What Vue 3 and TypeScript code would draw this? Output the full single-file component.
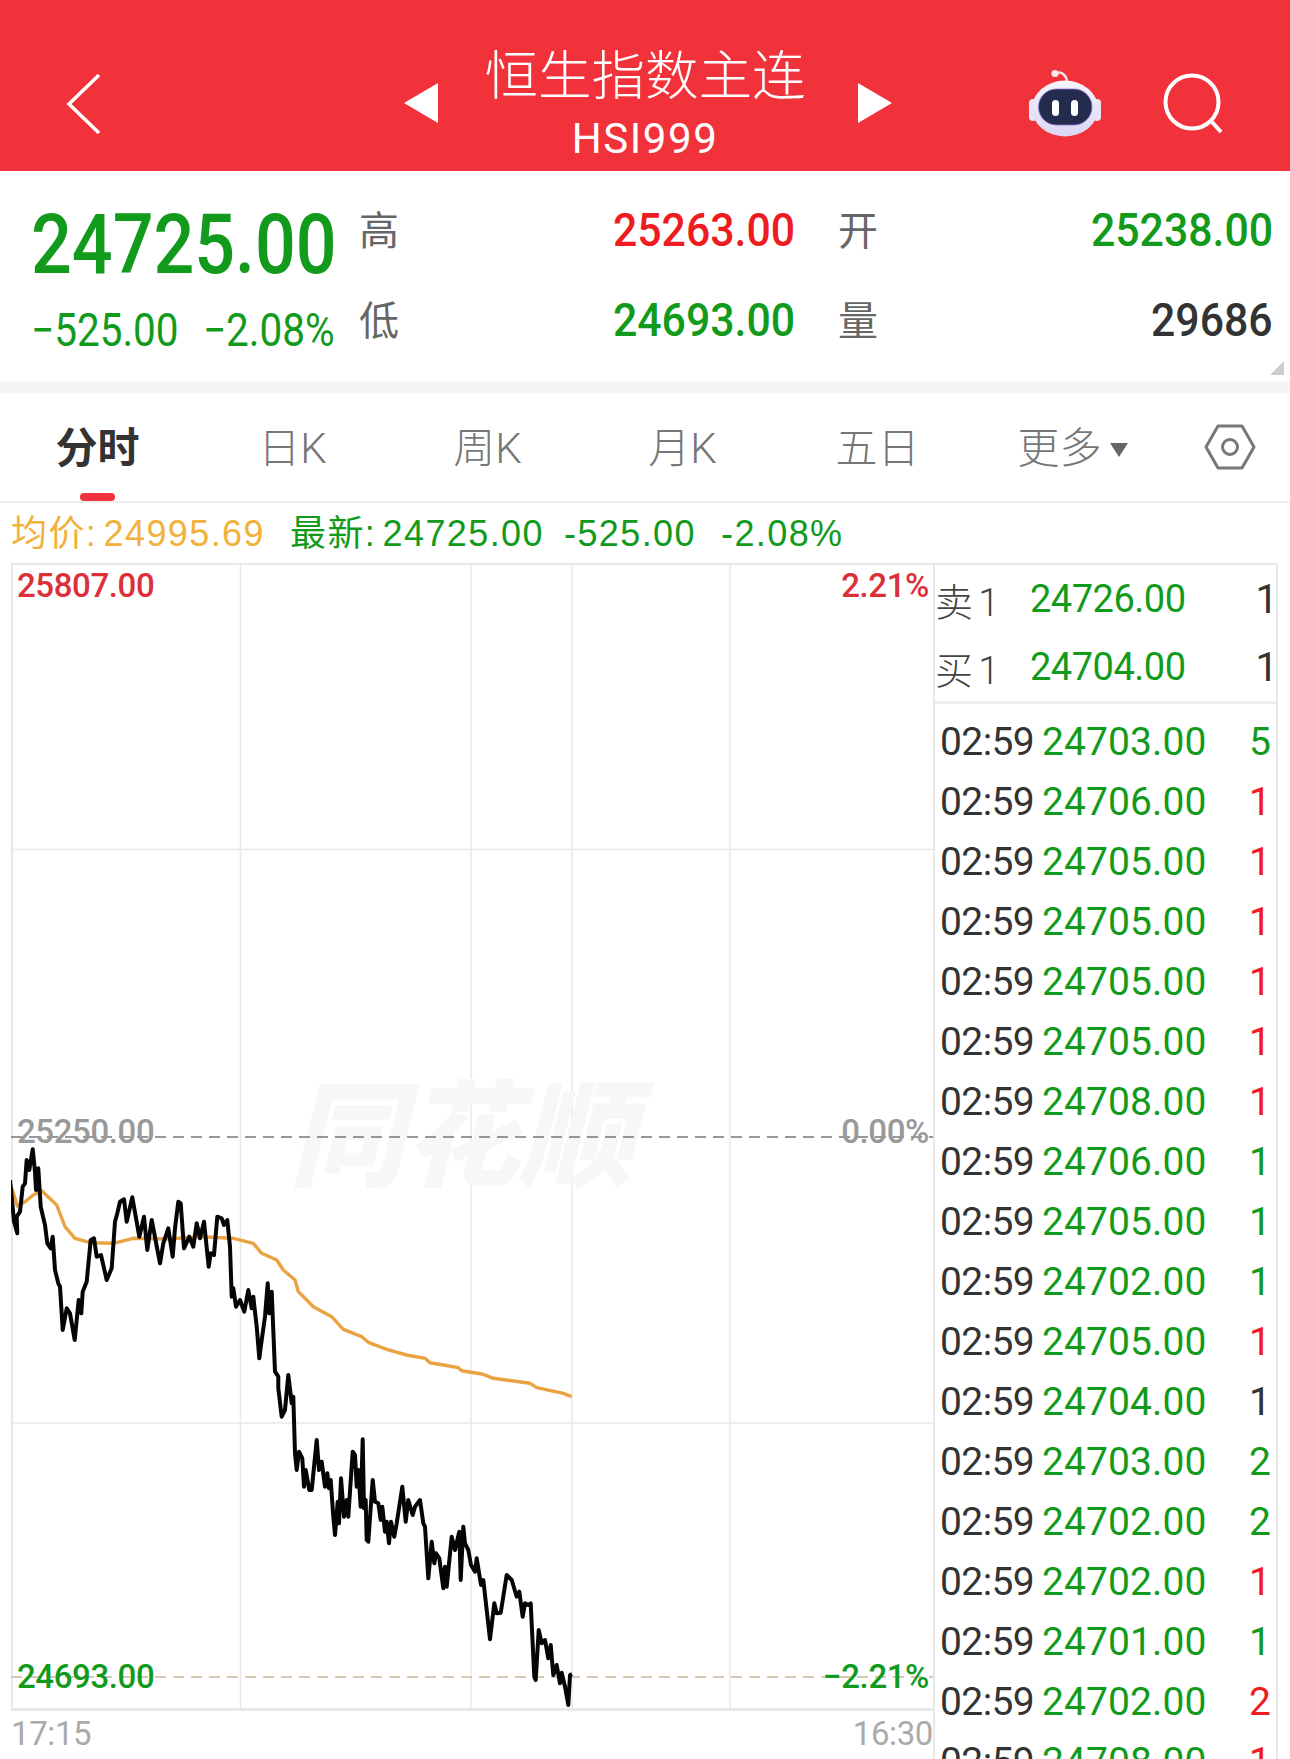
<script setup lang="ts">
type P = [number, number];
const conv = (pts: P[], ox: number, oy: number) =>
  pts.map(([x, y]) => `${(x / 3 + ox).toFixed(1)},${(y / 3 + oy).toFixed(1)}`);

const black3: P[] = [[30,240],[36,300],[42,365],[52,400],[50,350],[60,335],[68,260],[75,250],[80,180],[88,210],[98,148],[105,215],[108,270],[115,205],[122,320],[135,375],[142,430],[152,445],[158,410],[165,510],[175,550],[180,560],[188,690],[200,625],[210,640],[224,720],[236,600],[244,640],[248,575],[260,545],[272,420],[282,415],[290,470],[303,465],[320,540],[335,505],[345,365],[352,340],[360,305],[372,298],[380,365],[397,292],[418,410],[432,350],[442,450],[455,360],[480,490],[490,430],[505,385],[518,470],[525,385],[535,305],[542,310],[552,445],[568,410],[580,440],[590,370],[600,415],[612,365],[626,500],[632,460],[642,465],[652,350],[665,355],[672,375],[682,360],[690,440],[695,590],[700,565],[708,620],[720,600],[733,635],[745,570],[755,625],[760,590],[770,680],[778,775],[785,720],[795,650],[803,550],[808,640],[815,575],[825,815],[832,825]];
const black9: P[] = [[25,50],[25,85],[35,170],[45,150],[55,45],[65,130],[70,110],[75,280],[80,330],[87,275],[97,295],[102,380],[107,330],[118,390],[125,390],[140,240],[147,330],[155,305],[165,380],[172,340],[177,385],[182,360],[190,470],[195,525],[203,425],[207,490],[213,355],[222,470],[230,420],[235,470],[248,275],[255,285],[260,380],[265,330],[272,440],[278,238],[282,445],[287,420],[290,540],[295,545],[308,360],[315,425],[325,430],[332,480],[337,440],[345,515],[350,485],[357,550],[363,485],[373,530],[380,490],[397,380],[407,485],[415,420],[428,465],[435,440],[450,420],[460,490]];
const black10: P[] = [[70,130],[75,140],[85,295],[95,185],[103,250],[108,220],[118,235],[130,325],[135,260],[140,320],[155,170],[165,210],[178,155],[182,300],[190,140],[195,190],[205,210],[213,255],[225,275],[230,235],[243,315],[250,300],[270,478],[283,370],[290,400],[302,398],[320,285],[335,300],[350,350],[358,335],[368,410],[375,370],[385,375],[392,370],[403,590],[407,600],[416,450],[425,490],[435,480],[445,535],[452,495],[460,585],[470,555],[480,610],[485,578],[495,620],[505,675],[510,585],[516,582]];
const pricePath = [...conv(black3, 0, 1100), ...conv(black9, 270, 1360), ...conv(black10, 400, 1480)].join(' ');

const orange3: P[] = [[36,265],[52,318],[75,305],[100,285],[125,272],[170,315],[195,380],[225,415],[270,428],[340,430],[400,415],[500,417],[600,410],[700,415],[760,430],[785,460],[830,480],[850,510],[885,540],[895,575]];
const orange4: P[] = [[0,40],[40,80],[95,110],[130,148],[185,170],[205,187],[260,208],[320,225],[375,235],[390,248],[430,255],[475,263],[485,272],[550,283],[580,295],[690,310],[710,323],[790,340],[815,350]];
const avgPath = [...conv(orange3, 0, 1100), ...conv(orange4, 300, 1280)].join(' ');

const tabs = ['分时', '日K', '周K', '月K', '五日'];
const trades: { price: string; qty: number; tone: string }[] = [
  { price: '24703.00', qty: 5, tone: 'green' },
  { price: '24706.00', qty: 1, tone: 'red' },
  { price: '24705.00', qty: 1, tone: 'red' },
  { price: '24705.00', qty: 1, tone: 'red' },
  { price: '24705.00', qty: 1, tone: 'red' },
  { price: '24705.00', qty: 1, tone: 'red' },
  { price: '24708.00', qty: 1, tone: 'red' },
  { price: '24706.00', qty: 1, tone: 'green' },
  { price: '24705.00', qty: 1, tone: 'green' },
  { price: '24702.00', qty: 1, tone: 'green' },
  { price: '24705.00', qty: 1, tone: 'red' },
  { price: '24704.00', qty: 1, tone: 'dark' },
  { price: '24703.00', qty: 2, tone: 'green' },
  { price: '24702.00', qty: 2, tone: 'green' },
  { price: '24702.00', qty: 1, tone: 'red' },
  { price: '24701.00', qty: 1, tone: 'green' },
  { price: '24702.00', qty: 2, tone: 'red' },
  { price: '24708.00', qty: 1, tone: 'red' },
];
</script>

<template>
  <div class="page">
    <header class="bar">
      <svg class="back" width="36" height="64" viewBox="0 0 36 64">
        <path d="M33 3 L3 32 L33 61" fill="none" stroke="#fff" stroke-width="3.5" />
      </svg>
      <div class="center">
        <svg width="34" height="40" viewBox="0 0 34 40"><path d="M34 0 V40 L0 20 Z" fill="#fff" /></svg>
        <div class="title">
          <div class="name">恒生指数主连</div>
          <div class="code">HSI999</div>
        </div>
        <svg width="34" height="40" viewBox="0 0 34 40"><path d="M0 0 V40 L34 20 Z" fill="#fff" /></svg>
      </div>
      <svg class="robot" width="80" height="76" viewBox="15 12 80 76">
        <defs>
          <linearGradient id="shell" x1="0" y1="0" x2="0" y2="1">
            <stop offset="0" stop-color="#f6f4fc" />
            <stop offset="1" stop-color="#dcd6f4" />
          </linearGradient>
        </defs>
        <path d="M45 17 C50 15 56 18 57 25" fill="none" stroke="#f1e6ec" stroke-width="2.4" />
        <circle cx="45" cy="17.5" r="3.6" fill="#f6e7ea" />
        <rect x="19" y="43" width="8" height="22" rx="4" fill="#e8e4f8" />
        <rect x="83" y="43" width="8" height="22" rx="4" fill="#e8e4f8" />
        <ellipse cx="55" cy="52.5" rx="33" ry="28" fill="url(#shell)" />
        <rect x="28.5" y="33" width="53.5" height="36" rx="18" fill="#232c4c" stroke="#8f74d8" stroke-width="0.8" />
        <rect x="42" y="44" width="7" height="16" rx="3.5" fill="#fff" />
        <rect x="61" y="44" width="7" height="16" rx="3.5" fill="#fff" />
      </svg>
      <svg class="search" width="64" height="64" viewBox="0 0 64 64">
        <circle cx="29" cy="29" r="26.5" fill="none" stroke="#fff" stroke-width="4" />
        <path d="M49 49 L58 59" stroke="#fff" stroke-width="4" />
      </svg>
    </header>

    <section class="stats">
      <div class="quote">
        <div class="big">24725.00</div>
        <div class="sub"><span>−525.00</span><span>−2.08%</span></div>
      </div>
      <div class="grid">
        <div class="cell"><span class="label">高</span><span class="val red">25263.00</span></div>
        <div class="cell"><span class="label">开</span><span class="val green">25238.00</span></div>
        <div class="cell"><span class="label">低</span><span class="val green">24693.00</span></div>
        <div class="cell"><span class="label">量</span><span class="val dark">29686</span></div>
      </div>
      <span class="corner"></span>
    </section>

    <nav class="tabs">
      <div v-for="(t, i) in tabs" :key="t" class="tab" :class="{ active: i === 0 }">{{ t }}</div>
      <div class="tab">更多<span class="caret"></span></div>
      <div class="gear">
        <svg width="52" height="46" viewBox="0 0 52 46">
          <path d="M2 23 L14 2 H38 L50 23 L38 44 H14 Z" fill="none" stroke="#777" stroke-width="3" stroke-linejoin="round" />
          <circle cx="26" cy="23" r="7.5" fill="none" stroke="#777" stroke-width="3" />
        </svg>
      </div>
    </nav>

    <div class="info">
      <span class="avg">均价: 24995.69</span>
      <span class="green latest">最新: 24725.00</span>
      <span class="green delta">-525.00</span>
      <span class="green pct">-2.08%</span>
    </div>

    <div class="main">
      <div class="left">
        <div class="chart">
          <svg class="plot" width="922" height="1148" viewBox="11 563 922 1148">
            <g stroke="#e8e8e8" stroke-width="1.5">
              <line x1="240.5" y1="563" x2="240.5" y2="1711" />
              <line x1="471" y1="563" x2="471" y2="1711" />
              <line x1="572" y1="563" x2="572" y2="1711" />
              <line x1="730" y1="563" x2="730" y2="1711" />
              <line x1="11" y1="849.5" x2="933" y2="849.5" />
              <line x1="11" y1="1423" x2="933" y2="1423" />
            </g>
            <text class="mark" x="289" y="1177">同花顺</text>
            <line x1="11" y1="1137" x2="933" y2="1137" stroke="#777" stroke-width="1.5" stroke-dasharray="11 7" />
            <line x1="11" y1="1677" x2="933" y2="1677" stroke="#cdb898" stroke-width="1.5" stroke-dasharray="11 7" />
            <polyline :points="avgPath" fill="none" stroke="#e9a342" stroke-width="3.4" stroke-linejoin="round" />
            <polyline :points="pricePath" fill="none" stroke="#050505" stroke-width="4" stroke-linejoin="round" />
          </svg>
          <span class="tag tl c-red">25807.00</span>
          <span class="tag tr c-red">2.21%</span>
          <span class="tag ml c-gray">25250.00</span>
          <span class="tag mr c-gray">0.00%</span>
          <span class="tag bl green">24693.00</span>
          <span class="tag br green">−2.21%</span>
        </div>
        <div class="axis"><span>17:15</span><span>16:30</span></div>
      </div>

      <aside class="side">
        <div class="book">
          <div class="level"><span class="lab">卖 1</span><span class="lp green">24726.00</span><span class="lq">1</span></div>
          <div class="level"><span class="lab">买 1</span><span class="lp green">24704.00</span><span class="lq">1</span></div>
        </div>
        <div class="list">
          <div v-for="(r, i) in trades" :key="i" class="row">
            <span class="time">02:59</span>
            <span class="price green">{{ r.price }}</span>
            <span class="qty" :class="r.tone">{{ r.qty }}</span>
          </div>
        </div>
      </aside>
    </div>
  </div>
</template>

<style>
html, body { margin: 0; background: #fff; }
</style>

<style scoped>
.page {
  width: 1290px;
  height: 1759px;
  overflow: hidden;
  background: #fff;
  font-family: Roboto, "Noto Sans CJK SC", sans-serif;
  color: #333;
}
.green { color: #129a1c; }
.red { color: #ee1c20; }
.dark { color: #333; }

.bar {
  height: 171px;
  background: #f1323a;
  position: relative;
  display: flex;
  align-items: center;
  color: #fff;
}
.back { margin-left: 66px; margin-top: 36px; flex: none; }
.center {
  display: flex;
  align-items: center;
  margin-left: 302px;
  width: 488px;
  justify-content: space-between;
  flex: none;
}
.center svg { margin-top: 34px; flex: none; }
.title { text-align: center; margin-left: -6px; }
.name {
  font-size: 53.5px;
  line-height: 60px;
  font-weight: 300;
  margin-top: 34px;
  font-family: "Noto Sans CJK SC", sans-serif;
}
.code { font-size: 42px; line-height: 50px; margin-top: 12px; letter-spacing: 1.6px; }
.robot { margin-left: 133px; margin-top: 40px; flex: none; }
.search { margin-left: 58px; margin-top: 38px; flex: none; }

.stats {
  height: 210px;
  position: relative;
  display: flex;
  border-bottom: 12px solid #f5f5f5;
  box-sizing: content-box;
}
.quote { width: 326px; margin-left: 31px; flex: none; color: #129a1c; padding-top: 29px; }
.big {
  font-size: 84px;
  line-height: 90px;
  font-weight: 500;
  white-space: nowrap;
  transform: scaleX(0.855);
  transform-origin: left center;
}
.sub {
  display: flex;
  justify-content: space-between;
  width: 345px;
  margin-top: 10px;
  font-size: 46px;
  line-height: 60px;
  transform: scaleX(0.88);
  transform-origin: left center;
}
.grid {
  display: grid;
  grid-template-columns: 436px 435px;
  grid-auto-rows: 90px;
  column-gap: 43px;
  padding-top: 13px;
  margin-left: 2px;
}
.cell { display: flex; justify-content: space-between; align-items: center; }
.label {
  font-size: 40px;
  line-height: 44px;
  margin-top: -2px;
  color: #666;
  font-family: "Noto Sans CJK SC", sans-serif;
}
.val {
  font-size: 47px;
  font-weight: 500;
  display: inline-block;
  transform: scaleX(0.91);
  transform-origin: right center;
}
.corner {
  position: absolute;
  right: 6px;
  bottom: 6px;
  width: 0;
  height: 0;
  border-left: 14px solid transparent;
  border-bottom: 14px solid #ccc;
}

.tabs {
  height: 108px;
  display: grid;
  grid-template-columns: repeat(6, 195px) 1fr;
  align-items: center;
  border-bottom: 2px solid #eee;
  box-sizing: content-box;
}
.tab {
  text-align: center;
  font-size: 42px;
  color: #777;
  font-weight: 300;
  position: relative;
  height: 108px;
  line-height: 112px;
}
.tab.active { color: #333; font-weight: 700; }
.tab.active::after {
  content: "";
  position: absolute;
  left: 80px;
  bottom: 0;
  width: 35px;
  height: 8px;
  border-radius: 4px;
  background: #f2323c;
}
.caret {
  display: inline-block;
  width: 0;
  height: 0;
  margin-left: 8px;
  vertical-align: 6px;
  border-left: 9px solid transparent;
  border-right: 9px solid transparent;
  border-top: 14px solid #666;
}
.gear { display: flex; justify-content: center; margin-left: -1px; }

.info {
  height: 60px;
  display: flex;
  align-items: baseline;
  padding-left: 11px;
  font-family: "Liberation Sans", "Noto Sans CJK SC", sans-serif;
  font-size: 36px;
  line-height: 61px;
  letter-spacing: 1.4px;
  word-spacing: -5px;
  white-space: nowrap;
}
.avg { color: #f2b13a; width: 279px; flex: none; }
.latest { width: 274px; flex: none; }
.delta { width: 157px; flex: none; }

.main { display: flex; padding-left: 11px; height: 1196px; }
.left { width: 922px; flex: none; }
.chart {
  position: relative;
  width: 922px;
  height: 1148px;
  box-sizing: border-box;
  border-top: 2px solid #e8e8e8;
  border-left: 2px solid #e8e8e8;
  border-bottom: 3px solid #e8e8e8;
}
.plot { position: absolute; left: -2px; top: -2px; }
.mark {
  font-family: "Noto Sans CJK SC", sans-serif;
  font-size: 115px;
  font-weight: 900;
  font-style: italic;
  fill: #f7f7f7;
}
.tag {
  position: absolute;
  font-size: 33px;
  line-height: 40px;
  font-weight: 500;
  letter-spacing: -0.4px;
  white-space: nowrap;
}
.c-red { color: #dc2f38; }
.c-gray { color: #999; }
.tl { left: 4px; top: 1px; }
.tr { right: 4px; top: 1px; }
.ml { left: 4px; top: 547px; }
.mr { right: 4px; top: 547px; }
.bl { left: 4px; top: 1092px; }
.br { right: 4px; top: 1092px; }
.axis {
  display: flex;
  justify-content: space-between;
  font-size: 33px;
  line-height: 46px;
  color: #aaa;
  letter-spacing: -0.4px;
}

.side {
  width: 345px;
  flex: none;
  box-sizing: border-box;
  border-left: 2px solid #e8e8e8;
  border-right: 2px solid #e8e8e8;
  border-top: 2px solid #e8e8e8;
  font-size: 38px;
}
.book { height: 136px; border-bottom: 3px solid #eee; }
.level {
  height: 68px;
  display: flex;
  align-items: center;
  padding: 0;
  font-size: 38px;
}
.lab { width: 95px; flex: none; color: #444; font-weight: 300; word-spacing: -4px; }
.lp { flex: 1; letter-spacing: -0.5px; }
.lq { color: #333; font-size: 40px; margin-right: -2px; }
.list { padding-top: 8px; }
.row {
  height: 60px;
  display: grid;
  grid-template-columns: 102px 1fr auto;
  align-items: center;
  padding: 0 5px 0 5px;
  font-size: 39px;
  letter-spacing: 0.1px;
  white-space: nowrap;
}
.time { color: #333; letter-spacing: -0.6px; }
</style>
